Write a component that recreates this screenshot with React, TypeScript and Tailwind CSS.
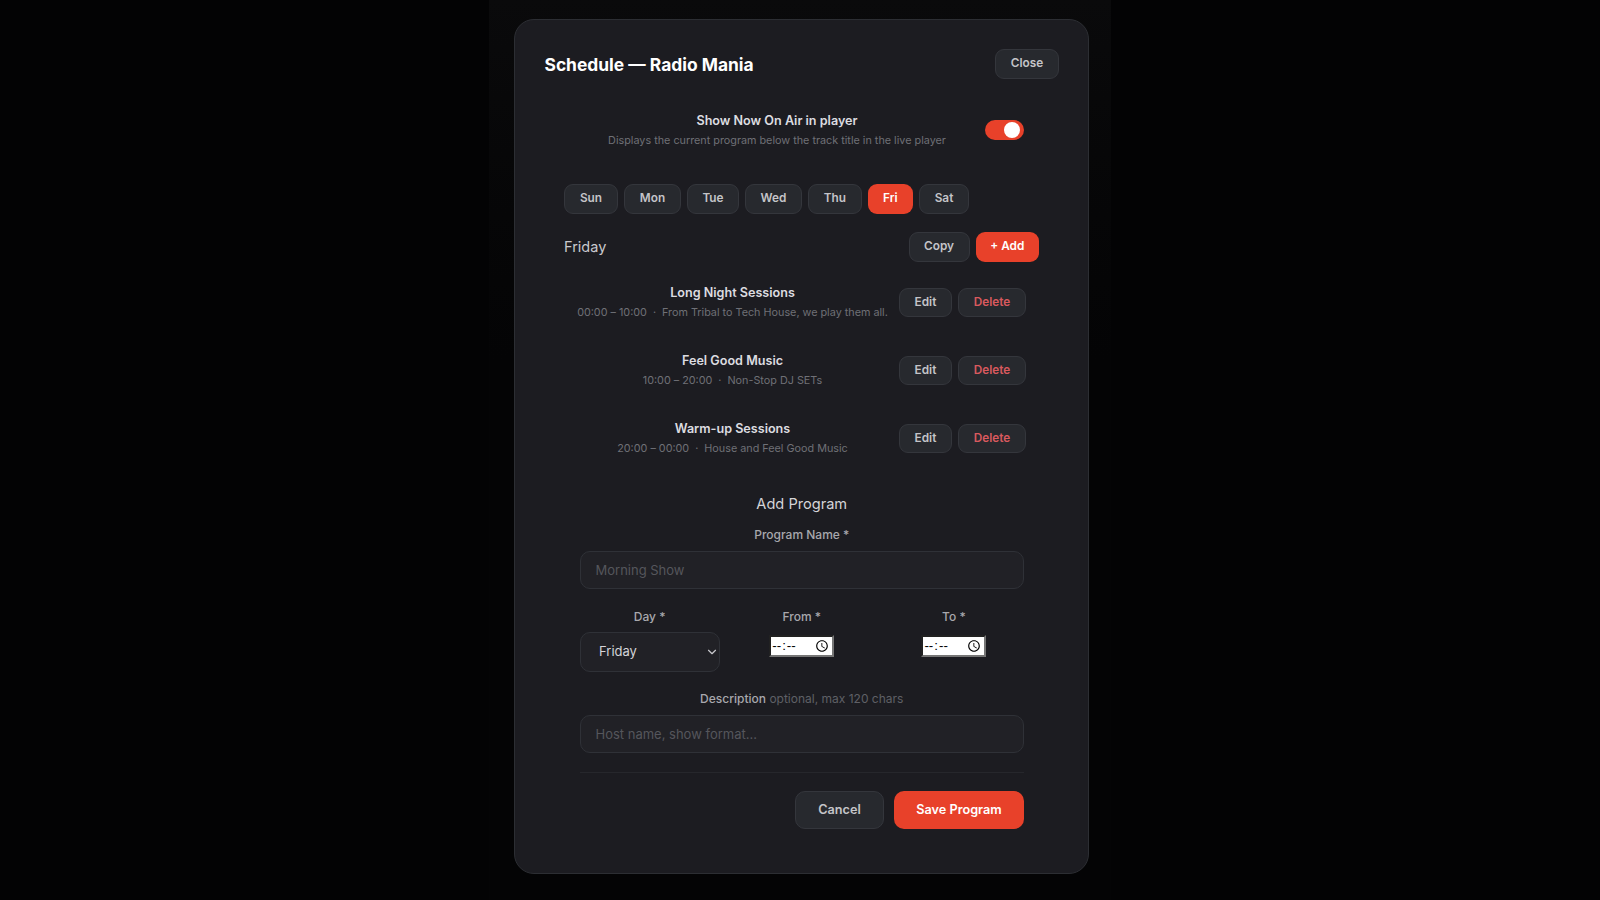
import React from "react";
import { ChevronDown } from "lucide-react";

const btn =
  "h-[29.5px] rounded-[9px] border border-[#34363c] bg-[#27292e] text-[11.8px] font-semibold text-[#c4c4c8] flex items-center justify-center";
const red = "h-[29.5px] rounded-[9px] bg-[#e8412a] text-[11.8px] font-semibold text-white flex items-center justify-center";

const days: [string, string][] = [
  ["Sun", "w-[54px]"],
  ["Mon", "w-[57px]"],
  ["Tue", "w-[52px]"],
  ["Wed", "w-[57px]"],
  ["Thu", "w-[53.5px]"],
  ["Fri", "w-[45.5px]"],
  ["Sat", "w-[50px]"],
];

const programs = [
  { name: "Long Night Sessions", time: "00:00 – 10:00", desc: "From Tribal to Tech House, we play them all." },
  { name: "Feel Good Music", time: "10:00 – 20:00", desc: "Non-Stop DJ SETs" },
  { name: "Warm-up Sessions", time: "20:00 – 00:00", desc: "House and Feel Good Music" },
];

const timeInput =
  "h-[22px] w-[65px] border-2 [border-style:inset] border-[#767676] bg-white text-[13.33px] text-black [color-scheme:light] font-['Liberation_Sans',sans-serif] [&::-webkit-datetime-edit-ampm-field]:hidden";

export default function App() {
  return (
    <div className="h-[900px] overflow-hidden bg-[#030304] flex justify-center font-['Inter',sans-serif]">
      <div className="w-[622px] h-[900px] bg-linear-to-b from-[#0a0a0b] to-[#040405] to-[40%] pl-[25px] pt-[19px]">
        <div className="w-[575px] h-[855px] rounded-[20px] border border-[#2c2e33] bg-[#1c1c21] px-[29px] pt-[29px]">
          <div className="flex items-center justify-between h-[30px]">
            <h2 className="pt-[2px] pl-[0.5px] text-[17.4px] font-bold text-white">Schedule — Radio Mania</h2>
            <button className={btn + " w-[64px]"}>Close</button>
          </div>

          <div className="mt-[31px] px-[35px] flex items-center gap-[10px]">
            <div className="flex-1 text-center pt-[1px]">
              <div className="text-[12.6px] leading-[20px] font-semibold text-[#dcdce0]">Show Now On Air in player</div>
              <div className="text-[10.8px] leading-[20px] text-[#6f7076]">
                Displays the current program below the track title in the live player
              </div>
            </div>
            <div className="mb-[1px] w-[39px] h-[20px] rounded-full bg-[#e8412a] flex items-center justify-end pr-[4px]">
              <div className="w-[16px] h-[16px] rounded-full bg-white" />
            </div>
          </div>

          <div className="mt-[33px] px-5 flex gap-[6px]">
            {days.map(([d, w]) => (
              <button key={d} className={(d === "Fri" ? red : btn) + " " + w}>
                {d}
              </button>
            ))}
          </div>

          <div className="mt-[18.5px] px-5 flex items-center">
            <div className="flex-1 text-[14.5px] leading-[20px] text-[#c9c9cd]">Friday</div>
            <button className={btn + " w-[61px] mr-[6px]"}>Copy</button>
            <button className={red + " w-[63.5px]"}>+ Add</button>
          </div>

          <div className="mt-[26px] mx-5 pl-3 pr-[13px] flex flex-col gap-[38px]">
            {programs.map((p) => (
              <div key={p.name} className="flex items-center h-[30px]">
                <div className="flex-1 text-center pt-[1px]">
                  <div className="text-[12.6px] leading-[20px] font-semibold text-[#dcdce0]">{p.name}</div>
                  <div className="text-[10.8px] leading-[20px] text-[#6f7076] whitespace-nowrap">
                    {p.time}
                    <span className="mx-[6px]">·</span>
                    {p.desc}
                  </div>
                </div>
                <button className={btn + " w-[53px] ml-[10px] mr-[6px]"}>Edit</button>
                <button className={btn + " w-[68px] !text-[#d9595e]"}>Delete</button>
              </div>
            ))}
          </div>

          <div className="mt-[40px] pl-[35.5px] pr-[35px]">
            <div className="text-center text-[14.6px] leading-[20px] text-[#d4d4d8]">Add Program</div>

            <label className="block mt-[11px] text-center text-[12px] leading-[20px] font-medium text-[#a8a8ad]">
              Program Name *
            </label>
            <input
              placeholder="Morning Show"
              className="mt-[6px] block w-full h-[38px] rounded-[10px] border border-[#2f3137] bg-[#212126] px-[15px] text-[13px] text-white placeholder:text-[#55565c] outline-none"
            />

            <div className="mt-[18px] grid grid-cols-3 gap-3 text-center">
              <div>
                <div className="text-[12px] leading-[20px] font-medium text-[#a8a8ad]">Day *</div>
                <div className="relative mt-[5px]">
                  <select
                    defaultValue="Friday"
                    className="appearance-none block w-full h-[40px] rounded-[10px] border border-[#2f3137] bg-[#212126] pl-[18.5px] pr-[3px] text-[13px] text-[#d4d4d8] outline-none"
                  >
                    <option>Sunday</option>
                    <option>Monday</option>
                    <option>Tuesday</option>
                    <option>Wednesday</option>
                    <option>Thursday</option>
                    <option>Friday</option>
                    <option>Saturday</option>
                  </select>
                  <ChevronDown
                    size={14}
                    strokeWidth={2}
                    className="absolute right-[1px] top-[13px] text-[#c8c8cc] pointer-events-none"
                  />
                </div>
              </div>
              <div>
                <div className="text-[12px] leading-[20px] font-medium text-[#a8a8ad]">From *</div>
                <input type="time" className={timeInput + " mt-[8px] mx-auto block"} />
              </div>
              <div>
                <div className="text-[12px] leading-[20px] font-medium text-[#a8a8ad]">To *</div>
                <input type="time" className={timeInput + " mt-[8px] mx-auto block"} />
              </div>
            </div>

            <label className="block mt-[17px] text-center text-[12px] leading-[20px] text-[#5f6066]">
              <span className="font-medium text-[#a8a8ad]">Description</span> optional, max 120 chars
            </label>
            <input
              placeholder="Host name, show format..."
              className="mt-[6px] block w-full h-[38px] rounded-[10px] border border-[#2f3137] bg-[#212126] px-[15px] text-[13px] text-white placeholder:text-[#55565c] outline-none"
            />

            <div className="mt-[19px] pt-[18px] border-t border-[#26272c] flex justify-end gap-[10px]">
              <button className="h-[38px] w-[89px] rounded-[10px] border border-[#34363c] bg-[#27292e] text-[12.7px] font-semibold text-[#c4c4c8]">
                Cancel
              </button>
              <button className="h-[38px] w-[130px] rounded-[10px] bg-[#e8412a] text-[12.7px] font-semibold text-white">
                Save Program
              </button>
            </div>
          </div>
        </div>
      </div>
    </div>
  );
}
